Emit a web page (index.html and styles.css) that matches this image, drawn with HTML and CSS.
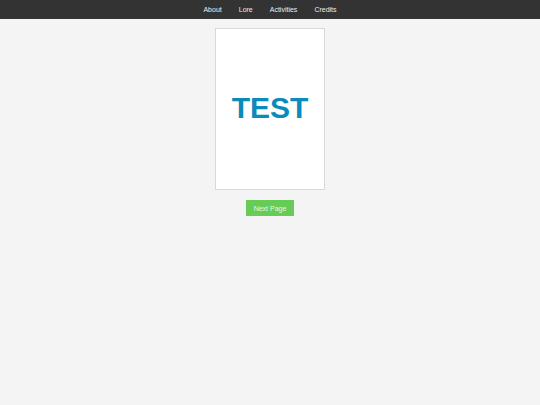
FILE: index.html
```html
<!DOCTYPE html>
<html>
<head>
<meta charset="utf-8">
<link rel="stylesheet" href="styles.css">
</head>
<body>
<nav class="topnav">
  <a class="nav-link" href="#">About</a>
  <a class="nav-link" href="#">Lore</a>
  <a class="nav-link" href="#">Activities</a>
  <a class="nav-link" href="#">Credits</a>
</nav>
<main class="content">
  <div class="page-card">
    <span class="page-title">TEST</span>
  </div>
  <button class="next-btn">Next Page</button>
</main>
</body>
</html>
```
FILE: styles.css
```css
html, body {
  margin: 0;
  padding: 0;
  background: #f4f4f4;
  font-family: "Liberation Sans", Arial, sans-serif;
}
.topnav {
  height: 19px;
  background: #333333;
  display: flex;
  justify-content: center;
  align-items: center;
  gap: 17px;
}
.nav-link {
  color: #ececec;
  font-size: 7px;
  text-decoration: none;
}
.content {
  display: flex;
  flex-direction: column;
  align-items: center;
  padding-top: 9px;
}
.page-card {
  width: 108px;
  height: 160px;
  background: #ffffff;
  border: 1px solid #d9d9d9;
  display: flex;
  align-items: center;
  justify-content: center;
}
.page-title {
  color: #0a8bba;
  font-weight: bold;
  font-size: 30px;
  line-height: 1;
  margin-top: -2px;
}
.next-btn {
  margin-top: 10px;
  width: 48px;
  height: 16px;
  padding: 0;
  border: none;
  background: #66cc55;
  color: #e8f7e4;
  font-family: "Liberation Sans", Arial, sans-serif;
  font-size: 7px;
}
```
